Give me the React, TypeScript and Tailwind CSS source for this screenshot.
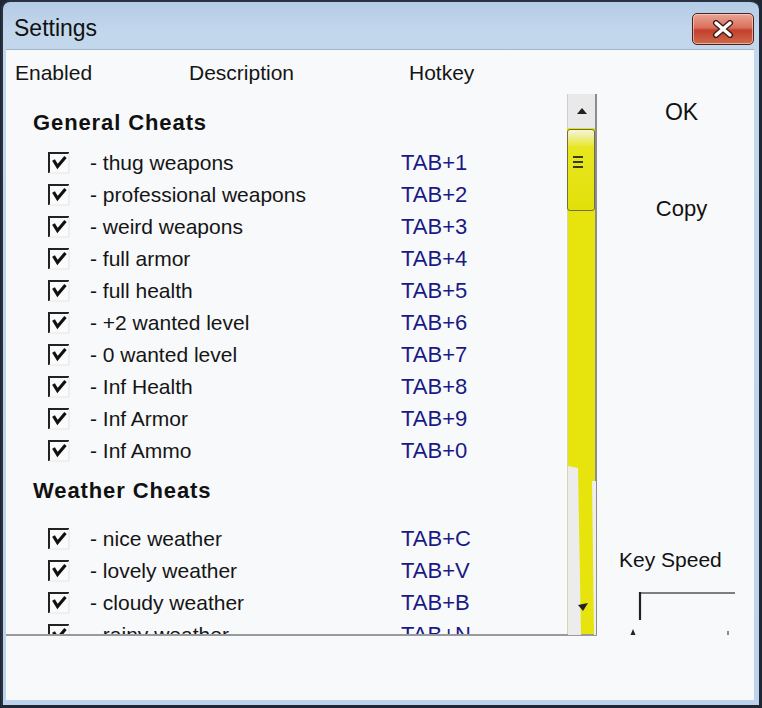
import React from 'react';

type Cheat = { label: string; key: string };

const general: Cheat[] = [
  { label: 'thug weapons', key: 'TAB+1' },
  { label: 'professional weapons', key: 'TAB+2' },
  { label: 'weird weapons', key: 'TAB+3' },
  { label: 'full armor', key: 'TAB+4' },
  { label: 'full health', key: 'TAB+5' },
  { label: '+2 wanted level', key: 'TAB+6' },
  { label: '0 wanted level', key: 'TAB+7' },
  { label: 'Inf Health', key: 'TAB+8' },
  { label: 'Inf Armor', key: 'TAB+9' },
  { label: 'Inf Ammo', key: 'TAB+0' },
];

const weather: Cheat[] = [
  { label: 'nice weather', key: 'TAB+C' },
  { label: 'lovely weather', key: 'TAB+V' },
  { label: 'cloudy weather', key: 'TAB+B' },
  { label: 'rainy weather', key: 'TAB+N' },
];

const CheckBox = () => (
  <svg width="22" height="22" viewBox="0 0 22 22" className="ml-[42px] shrink-0">
    <rect x="0" y="0" width="22" height="22" fill="#fbfbfb" />
    <path d="M1 21 L1 1 L21 1" stroke="#222" strokeWidth="2" fill="none" />
    <path d="M21 1 L21 21 L1 21" stroke="#e4e4e4" strokeWidth="1.2" fill="none" />
    <path d="M5.5 8 L9.5 14.5 L17.5 5" stroke="#111" strokeWidth="3.2" fill="none" strokeLinejoin="miter" />
  </svg>
);

const Row = ({ c }: { c: Cheat }) => (
  <div className="flex items-center h-[32px] shrink-0">
    <CheckBox />
    <span className="ml-[20px] w-[311px] whitespace-nowrap text-[21px] leading-[24px] text-[#151515]">- {c.label}</span>
    <span className="leading-[24px] text-[#1a1a84]">{c.key}</span>
  </div>
);

const App: React.FC = () => {
  return (
    <div
      className="w-[762px] h-[708px] bg-[#1e2733] overflow-hidden text-[22px] leading-none"
      style={{ fontFamily: '"Liberation Sans", Arial, sans-serif' }}
    >
      <div className="ml-[1px] w-[758px] h-[705px] flex flex-col rounded-t-[9px] border-t-2 border-l-2 border-[#2a3140] bg-[linear-gradient(#b4cce6,#c3d7ec_30px,#bcd3eb)]">
        {/* title bar */}
        <div className="h-[47px] shrink-0 flex items-center justify-between pl-[11px] pr-[5px]">
          <span className="text-[23px] text-[#111] mt-[6px]">Settings</span>
          <div className="mt-[6px] w-[62px] h-[32px] rounded-[5px] border border-[#4a2320] bg-[linear-gradient(#eaa595,#d9705c_45%,#c2402a_55%,#cf6a4e)] flex items-center justify-center shadow-[inset_0_0_0_1px_rgba(255,220,210,0.6)]">
            <svg width="24" height="18" viewBox="0 0 24 18">
              <path d="M5 3 L19 15 M19 3 L5 15" stroke="#3a1a16" strokeWidth="6" strokeLinecap="round" />
              <path d="M5 3 L19 15 M19 3 L5 15" stroke="#ffffff" strokeWidth="3.4" strokeLinecap="round" />
            </svg>
          </div>
        </div>

        {/* client area */}
        <div className="flex-1 ml-[3px] mr-[5px] mb-[5px] bg-[#f8f9fb] border-t border-[#9fb5cc] flex flex-col text-[#151515]">
          <div className="h-[44px] shrink-0 flex items-center pl-[9px] text-[21px]">
            <span className="w-[174px]">Enabled</span>
            <span className="w-[220px]">Description</span>
            <span>Hotkey</span>
          </div>

          <div className="flex h-[542px] shrink-0">
            {/* list panel */}
            <div className="w-[591px] flex border-b-2 border-[#9a9a9a]">
              <div className="w-[561px] overflow-hidden flex flex-col">
                <div className="h-[32px] shrink-0 mt-[13px] flex items-center pl-[27px] font-bold tracking-[0.9px] text-[#111]">General Cheats</div>
                <div className="mt-[8px] flex flex-col">
                  {general.map(c => <Row key={c.key} c={c} />)}
                </div>
                <div className="h-[32px] shrink-0 mt-[8px] flex items-center pl-[27px] font-bold tracking-[0.9px] text-[#111]">Weather Cheats</div>
                <div className="mt-[16px] flex flex-col">
                  {weather.map(c => <Row key={c.key} c={c} />)}
                </div>
              </div>

              {/* scrollbar */}
              <div className="w-[30px] flex flex-col border-r-2 border-[#8c8c8c] bg-[#e6e40c]">
                <div className="h-[34px] shrink-0 bg-[#e9e9e9] border-l border-[#cfcfcf] flex items-center justify-center">
                  <svg width="10" height="6" viewBox="0 0 10 6"><path d="M0 6 L5 0 L10 6 Z" fill="#222" /></svg>
                </div>
                <div className="h-[82px] shrink-0 mt-[1px] rounded-[3px] border border-[#6e6e40] bg-[linear-gradient(#f4f4e0,#e8e620_22%,#e2e00a)] flex items-center pl-[5px]">
                  <div className="flex flex-col gap-[3px] -mt-[16px]">
                    <div className="w-[10px] h-[2px] bg-[#3a3a1c]" />
                    <div className="w-[10px] h-[2px] bg-[#3a3a1c]" />
                    <div className="w-[10px] h-[2px] bg-[#3a3a1c]" />
                  </div>
                </div>
                <div className="flex-1 relative border-l border-[#d6d6b0]">
                  <svg className="absolute inset-0" width="28" height="424" viewBox="0 0 28 424" preserveAspectRatio="none">
                    <path d="M0 255 L10 257 L13 424 L0 424 Z" fill="#ececec" />
                    <path d="M24 270 L28 270 L28 424 L26 424 Z" fill="#eeeeee" />
                    <path d="M10 394 L20 392 L15 400 Z" fill="#222" />
                  </svg>
                </div>
              </div>
            </div>

            {/* right column */}
            <div className="flex-1 flex flex-col items-start">
              <div className="h-[36px] shrink-0 w-full flex items-center justify-center pl-[12px] text-[23px] text-[#111]">OK</div>
              <div className="h-[36px] shrink-0 w-full mt-[61px] flex items-center justify-center pl-[12px] text-[22px] text-[#111]">Copy</div>
              <div className="h-[26px] shrink-0 mt-[319px] ml-[22px] flex items-center text-[21px] text-[#111]">Key Speed</div>
              <div className="shrink-0 mt-[19px] ml-[32px] w-[108px] h-[52px]">
                <svg width="108" height="52" viewBox="0 0 108 52">
                  <path d="M11 2 L106 2" stroke="#555" strokeWidth="1.5" />
                  <path d="M11 1 L11 29" stroke="#222" strokeWidth="2.2" />
                  <path d="M1.5 44 L4 38 L6.5 44 Z" fill="#222" />
                  <path d="M99 40 L99 44" stroke="#666" strokeWidth="1.5" />
                </svg>
              </div>
            </div>
          </div>
        </div>
      </div>
    </div>
  );
};

export default App;
